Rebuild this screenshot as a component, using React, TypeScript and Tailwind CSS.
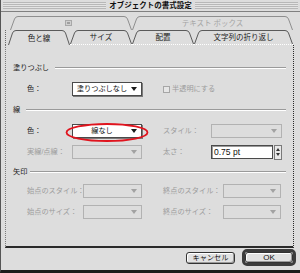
import React from "react";

const dim = "whitespace-nowrap text-[7.2px] text-[#9c9c9c]";
const dark = "whitespace-nowrap text-[7.2px] text-[#1a1a1a]";

function Arrow({ c = "#222" }: { c?: string }) {
  return (
    <svg width="6" height="4" viewBox="0 0 6 4" className="shrink-0">
      <path d="M0 0h6L3 4z" fill={c} />
    </svg>
  );
}

function TabShape({ w, h, stroke }: { w: number; h: number; stroke: string }) {
  const d = `M0.5 ${h} L4.5 3 Q5.5 0.5 8 0.5 L${w - 8} 0.5 Q${w - 5.5} 0.5 ${w - 4.5} 3 L${w - 0.5} ${h}`;
  return (
    <svg width={w} height={h} className="block">
      <path d={d} fill="none" stroke={stroke} strokeWidth="1" />
    </svg>
  );
}

function Tab({ w, label, active }: { w: number; label: string; active?: boolean }) {
  return (
    <div className={`relative ${active ? "" : "border-b border-dotted border-white"}`}>
      <TabShape w={w} h={active ? 15 : 14} stroke="#5a5a5a" />
      <span className="absolute inset-0 flex items-center justify-center whitespace-nowrap pt-[2px] text-[7.5px] text-[#1a1a1a]">{label}</span>
    </div>
  );
}

function Select({ label, disabled, className }: { label?: string; disabled?: boolean; className: string }) {
  return (
    <div
      className={`flex h-[14px] shrink-0 items-center pr-[4px] ${
        disabled ? "border border-[#b2b2b2] bg-[#dddddd]" : "border border-[#4a4a4a] bg-white shadow-[1px_1px_0_#7a7a7a]"
      } ${className}`}
    >
      <span className="flex-1 whitespace-nowrap text-center text-[7.2px] text-[#111]">{label}</span>
      <Arrow c={disabled ? "#a2a2a2" : "#1a1a1a"} />
    </div>
  );
}

function Header({ label, gap }: { label: string; gap: string }) {
  return (
    <div className="flex h-[10px] items-center pl-[7px] pr-[7px]">
      <span className={dark}>{label}</span>
      <div className={`h-[2px] flex-1 border-t border-[#9a9a9a] border-b border-b-white ${gap}`} />
    </div>
  );
}

export default function App() {
  return (
    <div className="flex h-[273px] w-[300px] flex-col border-l border-b-[3px] border-l-[#555] border-b-[#1c1c1c] bg-[#dddddd] font-['Liberation_Sans','Noto_Sans_CJK_JP',sans-serif] leading-none">
      {/* title bar */}
      <div className="h-[12px] border-b border-[#808080] px-[2px] pt-[2px]">
        <div className="flex h-[7px] items-center justify-center bg-[repeating-linear-gradient(180deg,#b8b8b8_0px,#b8b8b8_1px,#e4e4e4_1px,#e4e4e4_2px)]">
          <span className="bg-[#dddddd] px-[3px] text-[7.5px] font-bold text-[#111]">オブジェクトの書式設定</span>
        </div>
      </div>

      {/* back row of tabs */}
      <div className="ml-[9px] mt-[4px] flex h-[14px]">
        <div className="relative">
          <TabShape w={122} h={14} stroke="#8e8e8e" />
          <span className="absolute left-[55px] top-[4px] h-[6px] w-[7px] border border-[#a8a8a8] bg-[#cfcfcf]">
            <span className="absolute left-[1px] top-[1px] h-[2px] w-[3px] bg-[#9e9e9e]" />
          </span>
        </div>
        <div className="relative">
          <TabShape w={161} h={14} stroke="#8e8e8e" />
          <span className="absolute inset-0 flex items-center justify-center whitespace-nowrap pt-[1px] text-[7.5px] text-[#a4a4a4]">テキスト ボックス</span>
        </div>
      </div>

      {/* front row of tabs */}
      <div className="ml-[4px] flex h-[15px] border-l border-dotted border-[#6a6a6a] pl-[2px]">
        <Tab w={62} label="色と線" active />
        <Tab w={62} label="サイズ" />
        <Tab w={62} label="配置" />
        <Tab w={99} label="文字列の折り返し" />
      </div>

      {/* panel */}
      <div className="relative ml-[4px] h-[203px] w-[289px] border-l border-r border-b-2 border-dotted border-l-[#7a7a7a] border-r-[#2a2a2a] border-b-[#2a2a2a] [border-bottom-style:solid]">
        <div className="mt-[18px]">
          <Header label="塗りつぶし" gap="ml-[6px]" />
        </div>
        <div className="mt-[9px] flex h-[14px] items-center pl-[21px]">
          <span className={`w-[45px] ${dark}`}>色：</span>
          <Select label="塗りつぶしなし" className="w-[70px]" />
          <div className="w-[21px] shrink-0" />
          <span className="mr-[2px] h-[7px] w-[7px] border border-[#a6a6a6] bg-[#e6e6e6]" />
          <span className={dim}>半透明にする</span>
        </div>

        <div className="mt-[9px]">
          <Header label="線" gap="ml-[6px]" />
        </div>
        <div className="mt-[9px] flex h-[14px] items-center pl-[21px]">
          <span className={`w-[45px] ${dark}`}>色：</span>
          <div className="relative">
            <Select label="線なし" className="w-[70px]" />
            <svg width="84" height="21" className="absolute -left-[7px] -top-[2px]">
              <ellipse cx="42" cy="10.5" rx="40.5" ry="8.5" fill="none" stroke="#e0141e" strokeWidth="1.8" />
            </svg>
          </div>
          <div className="w-[21px] shrink-0" />
          <span className={`w-[48px] ${dim}`}>スタイル：</span>
          <Select disabled className="w-[71px]" />
        </div>
        <div className="mt-[7px] flex h-[14px] items-center pl-[21px]">
          <span className={`w-[45px] shrink-0 ${dim}`}>実線/点線：</span>
          <Select disabled className="w-[70px]" />
          <div className="w-[21px] shrink-0" />
          <span className={`w-[48px] shrink-0 ${dim}`}>太さ：</span>
          <div className="flex h-[14px] w-[62px] shrink-0 items-center border border-[#4a4a4a] bg-white pl-[2px] shadow-[inset_1px_1px_0_#9a9a9a]">
            <span className="text-[8.5px] text-[#111]">0.75 pt</span>
          </div>
          <div className="ml-[1px] flex h-[15px] w-[8px] shrink-0 flex-col items-center justify-center gap-[2px] border border-[#7a7a7a] bg-[#e8e8e8]">
            <svg width="4" height="3" viewBox="0 0 4 3"><path d="M0 3h4L2 0z" fill="#333" /></svg>
            <svg width="4" height="3" viewBox="0 0 4 3"><path d="M0 0h4L2 3z" fill="#333" /></svg>
          </div>
        </div>

        <div className="mt-[8px]">
          <Header label="矢印" gap="ml-[3px]" />
        </div>
        <div className="mt-[7px] flex h-[14px] items-center pl-[21px]">
          <span className={`w-[56px] shrink-0 ${dim}`}>始点のスタイル：</span>
          <Select disabled className="w-[59px]" />
          <div className="w-[21px] shrink-0" />
          <span className={`w-[60px] shrink-0 ${dim}`}>終点のスタイル：</span>
          <Select disabled className="w-[58px]" />
        </div>
        <div className="mt-[7px] flex h-[14px] items-center pl-[21px]">
          <span className={`w-[56px] shrink-0 ${dim}`}>始点のサイズ：</span>
          <Select disabled className="w-[59px]" />
          <div className="w-[21px] shrink-0" />
          <span className={`w-[60px] shrink-0 ${dim}`}>終点のサイズ：</span>
          <Select disabled className="w-[58px]" />
        </div>
      </div>

      {/* buttons */}
      <div className="mr-[4px] mt-[1px] flex items-center justify-end gap-[7px]">
        <button className="flex h-[12px] w-[49px] items-center justify-center rounded-[3px] border border-[#333] bg-[#e2e2e2] text-[7.2px] text-[#111] shadow-[inset_-1px_-1px_0_#9a9a9a,inset_1px_1px_0_#ffffff]">
          キャンセル
        </button>
        <div className="rounded-[5px] border-[3px] border-[#3c3c3c]">
          <button className="flex h-[11px] w-[48px] items-center justify-center rounded-[3px] border border-[#333] bg-[#e2e2e2] text-[8px] text-[#111] shadow-[inset_-1px_-1px_0_#9a9a9a,inset_1px_1px_0_#ffffff]">
            OK
          </button>
        </div>
      </div>
    </div>
  );
}
